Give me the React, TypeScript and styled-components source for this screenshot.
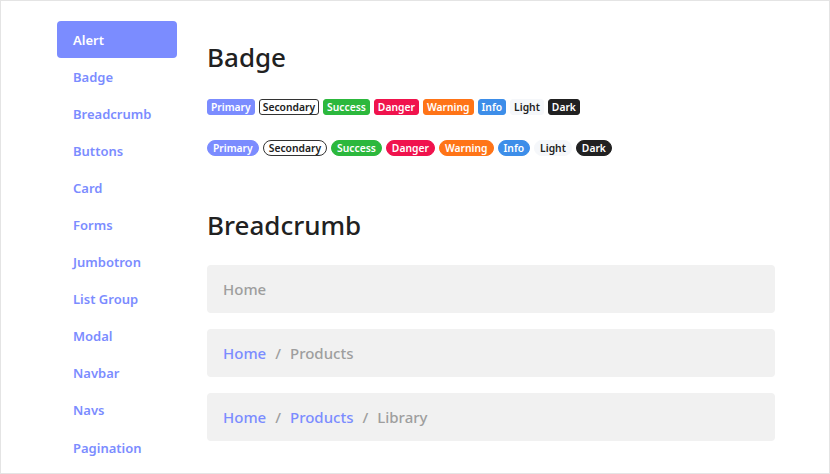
import React from 'react';
import styled, { createGlobalStyle } from 'styled-components';

const GlobalStyle = createGlobalStyle`
  html, body {
    margin: 0;
    padding: 0;
    background: #ffffff;
  }
  body {
    font-family: 'Noto Sans', 'Open Sans', sans-serif;
    color: #212121;
  }
  * {
    box-sizing: border-box;
  }
`;

const Page = styled.div`
  width: 830px;
  height: 474px;
  border: 1px solid #e4e4e4;
  overflow: hidden;
  display: grid;
  grid-template-columns: 120px 1fr;
  column-gap: 30px;
  padding: 20px 54px 0 56px;
`;

const Sidebar = styled.nav`
  display: flex;
  flex-direction: column;
`;

const NavItem = styled.a<{ $active?: boolean }>`
  display: flex;
  align-items: center;
  height: 37.1px;
  padding: 0 16px;
  border-radius: 4px;
  font-size: 13px;
  font-weight: 600;
  text-decoration: none;
  color: ${(p) => (p.$active ? '#ffffff' : '#7b8cff')};
  background: ${(p) => (p.$active ? '#7b8cff' : 'transparent')};
`;

const Main = styled.main`
  display: flex;
  flex-direction: column;
`;

const Section = styled.section`
  display: flex;
  flex-direction: column;
`;

const Title = styled.h2<{ $gap: number }>`
  margin: 18px 0 ${(p) => p.$gap}px;
  font-size: 26px;
  font-weight: 500;
  line-height: 36px;
  color: #212121;
`;

const BadgeRow = styled.div`
  display: flex;
  gap: 4px;
  margin-bottom: 25px;

  &:last-child {
    margin-bottom: 33px;
  }
`;

type Variant = 'primary' | 'secondary' | 'success' | 'danger' | 'warning' | 'info' | 'light' | 'dark';

const colors: Record<Variant, { bg: string; fg: string; border: string }> = {
  primary: { bg: '#7b8cff', fg: '#ffffff', border: '#7b8cff' },
  secondary: { bg: '#ffffff', fg: '#212121', border: '#333333' },
  success: { bg: '#2cb83d', fg: '#ffffff', border: '#2cb83d' },
  danger: { bg: '#f0134d', fg: '#ffffff', border: '#f0134d' },
  warning: { bg: '#ff7417', fg: '#ffffff', border: '#ff7417' },
  info: { bg: '#3d8ee9', fg: '#ffffff', border: '#3d8ee9' },
  light: { bg: '#f5f7fa', fg: '#212121', border: '#f5f7fa' },
  dark: { bg: '#212121', fg: '#ffffff', border: '#212121' },
};

const Badge = styled.span<{ $variant: Variant; $pill?: boolean }>`
  display: inline-flex;
  align-items: center;
  height: 16px;
  padding: 0 ${(p) => (p.$pill ? '5px' : '3px')};
  border-radius: ${(p) => (p.$pill ? '9px' : '3px')};
  border: 1px solid ${(p) => colors[p.$variant].border};
  background: ${(p) => colors[p.$variant].bg};
  color: ${(p) => colors[p.$variant].fg};
  font-size: 10.3px;
  font-weight: 600;
  line-height: 1;
`;

const Crumbs = styled.ol`
  display: flex;
  align-items: center;
  list-style: none;
  margin: 0 0 16px;
  height: 48px;
  padding: 0 16px;
  background: #f1f1f1;
  border-radius: 4px;
  font-size: 15px;
  font-weight: 500;
  color: #9e9e9e;
`;

const Crumb = styled.li<{ $link?: boolean }>`
  color: ${(p) => (p.$link ? '#7b8cff' : '#9e9e9e')};
`;

const Sep = styled.li`
  margin: 0 9px;
  color: #9e9e9e;
`;

const navItems = [
  'Alert', 'Badge', 'Breadcrumb', 'Buttons', 'Card', 'Forms',
  'Jumbotron', 'List Group', 'Modal', 'Navbar', 'Navs', 'Pagination',
];

const badges: { v: Variant; label: string }[] = [
  { v: 'primary', label: 'Primary' },
  { v: 'secondary', label: 'Secondary' },
  { v: 'success', label: 'Success' },
  { v: 'danger', label: 'Danger' },
  { v: 'warning', label: 'Warning' },
  { v: 'info', label: 'Info' },
  { v: 'light', label: 'Light' },
  { v: 'dark', label: 'Dark' },
];

const trails = [['Home'], ['Home', 'Products'], ['Home', 'Products', 'Library']];

export default function App() {
  return (
    <>
      <GlobalStyle />
      <Page>
        <Sidebar>
          {navItems.map((item, i) => (
            <NavItem key={item} href="#" $active={i === 0}>
              {item}
            </NavItem>
          ))}
        </Sidebar>
        <Main>
          <Section>
            <Title $gap={24}>Badge</Title>
            <BadgeRow>
              {badges.map((b) => (
                <Badge key={b.label} $variant={b.v}>{b.label}</Badge>
              ))}
            </BadgeRow>
            <BadgeRow>
              {badges.map((b) => (
                <Badge key={b.label} $variant={b.v} $pill>{b.label}</Badge>
              ))}
            </BadgeRow>
          </Section>
          <Section>
            <Title $gap={22}>Breadcrumb</Title>
            {trails.map((trail, t) => (
              <Crumbs key={t}>
                {trail.map((c, i) => (
                  <React.Fragment key={c}>
                    {i > 0 && <Sep>/</Sep>}
                    <Crumb $link={i < trail.length - 1}>{c}</Crumb>
                  </React.Fragment>
                ))}
              </Crumbs>
            ))}
          </Section>
        </Main>
      </Page>
    </>
  );
}
